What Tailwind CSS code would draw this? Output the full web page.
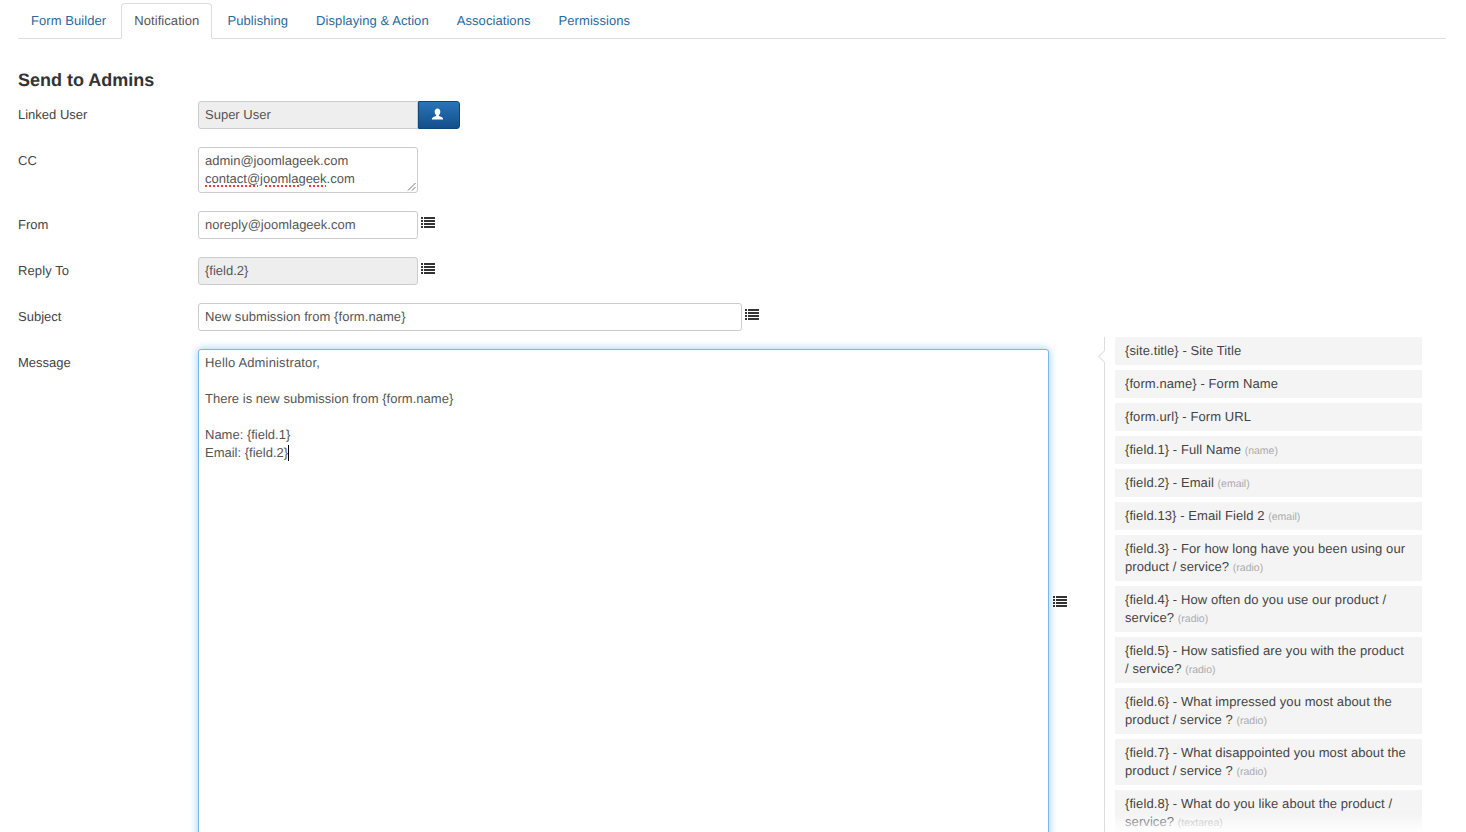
<!DOCTYPE html>
<html lang="en">
<head>
  <meta charset="UTF-8" />
  <meta name="viewport" content="width=device-width, initial-scale=1.0" />
  <title>Notification | Form</title>
  <script src="https://cdn.jsdelivr.net/npm/@tailwindcss/browser@4"></script>
</head>
<body class="bg-white h-screen overflow-hidden font-['Liberation_Sans',Arial,sans-serif] [text-rendering:geometricPrecision] text-[13px] leading-[18px] text-[#444]">
  <div class="pl-[18px] pr-[20px] pt-[3px]">

    <!-- Tabs -->
    <ul class="flex h-[36px] border-b border-[#ddd] tracking-[0.07px]">
      <li class="mr-[2px] px-[13px] pt-[9px] text-[#2a69a0]">Form Builder</li>
      <li class="mr-[2px] h-[36px] px-[12px] pt-[8px] bg-white border border-[#ddd] border-b-white rounded-t-[4px] text-[#555]">Notification</li>
      <li class="mr-[2px] px-[13px] pt-[9px] text-[#2a69a0]">Publishing</li>
      <li class="mr-[2px] px-[13px] pt-[9px] text-[#2a69a0]">Displaying &amp; Action</li>
      <li class="mr-[2px] px-[13px] pt-[9px] text-[#2a69a0]">Associations</li>
      <li class="mr-[2px] px-[13px] pt-[9px] text-[#2a69a0]">Permissions</li>
    </ul>

    <h2 class="mt-[28px] mb-[8px] text-[18px] leading-[26px] font-bold text-[#333]">Send to Admins</h2>

    <!-- Linked User -->
    <div class="flex mb-[18px]">
      <label class="w-[180px] pt-[5px]">Linked User</label>
      <div class="w-[220px] h-[28px] px-[6px] pt-[4px] bg-[#eee] border border-[#ccc] rounded-l-[3px] text-[#555]">Super User</div>
      <button class="w-[42px] h-[28px] pr-[4px] pb-[2px] flex items-center justify-center bg-gradient-to-b from-[#2a74b8] to-[#124f8c] border border-[#0f4679] rounded-r-[3px]">
        <svg class="w-[13px] h-[13px]" viewBox="0 0 12 12" fill="#fff"><path d="M6 0.5C4.4 0.5 3.4 1.8 3.4 3.4C3.4 4.8 4 5.9 4.8 6.5C4.8 7.2 4.5 7.5 3.4 7.9C2 8.4 0.8 8.8 0.8 10.6H11.2C11.2 8.8 10 8.4 8.6 7.9C7.5 7.5 7.2 7.2 7.2 6.5C8 5.9 8.6 4.8 8.6 3.4C8.6 1.8 7.6 0.5 6 0.5Z"/></svg>
      </button>
    </div>

    <!-- CC -->
    <div class="flex mb-[18px]">
      <label class="w-[180px] pt-[5px]">CC</label>
      <div class="relative w-[220px] h-[46px] px-[6px] pt-[4px] bg-white border border-[#ccc] rounded-[3px] text-[#555]">
        <div>admin@joomlageek.com</div>
        <div><span class="underline decoration-dotted decoration-[#e8402f] decoration-2 underline-offset-2">contact@joomlageek</span>.com</div>
        <svg class="absolute right-[1px] bottom-[1px] w-[9px] h-[9px]" viewBox="0 0 9 9" fill="none" stroke="#777" stroke-width="1"><path d="M1 8.5L8.5 1M5 8.5L8.5 5"/></svg>
      </div>
    </div>

    <!-- From -->
    <div class="flex mb-[18px]">
      <label class="w-[180px] pt-[5px]">From</label>
      <div class="w-[220px] h-[28px] px-[6px] pt-[4px] bg-white border border-[#ccc] rounded-[3px] text-[#555]">noreply@joomlageek.com</div>
      <svg class="ml-[3px] mt-[6px] w-[14px] h-[11px]" viewBox="0 0 14 11" fill="#333"><path d="M0 0h2v2H0zM3 0h11v2H3zM0 3h2v2H0zM3 3h11v2H3zM0 6h2v2H0zM3 6h11v2H3zM0 9h2v2H0zM3 9h11v2H3z"/></svg>
    </div>

    <!-- Reply To -->
    <div class="flex mb-[18px]">
      <label class="w-[180px] pt-[5px] tracking-[0.1px]">Reply To</label>
      <div class="w-[220px] h-[28px] px-[6px] pt-[4px] bg-[#eee] border border-[#ccc] rounded-[3px] text-[#555]">{field.2}</div>
      <svg class="ml-[3px] mt-[6px] w-[14px] h-[11px]" viewBox="0 0 14 11" fill="#333"><path d="M0 0h2v2H0zM3 0h11v2H3zM0 3h2v2H0zM3 3h11v2H3zM0 6h2v2H0zM3 6h11v2H3zM0 9h2v2H0zM3 9h11v2H3z"/></svg>
    </div>

    <!-- Subject -->
    <div class="flex mb-[18px]">
      <label class="w-[180px] pt-[5px]">Subject</label>
      <div class="w-[544px] h-[28px] px-[6px] pt-[4px] bg-white border border-[#ccc] rounded-[3px] text-[#555] tracking-[0.06px]">New submission from {form.name}</div>
      <svg class="ml-[3px] mt-[6px] w-[14px] h-[11px]" viewBox="0 0 14 11" fill="#333"><path d="M0 0h2v2H0zM3 0h11v2H3zM0 3h2v2H0zM3 3h11v2H3zM0 6h2v2H0zM3 6h11v2H3zM0 9h2v2H0zM3 9h11v2H3z"/></svg>
    </div>

    <!-- Message -->
    <div class="flex">
      <label class="w-[180px] pt-[5px] shrink-0">Message</label>
      <div class="w-[851px] h-[506px] shrink-0 px-[6px] pt-[4px] bg-white border border-[#75b9f0] rounded-[3px] text-[#555] shadow-[0_0_8px_rgba(82,168,236,0.6)]">
        <div class="tracking-[0.15px]">Hello Administrator,</div>
        <div class="h-[18px]"></div>
        <div class="tracking-[0.03px]">There is new submission from {form.name}</div>
        <div class="h-[18px]"></div>
        <div>Name: {field.1}</div>
        <div class="flex items-center">Email: {field.2}<span class="w-[1px] h-[16px] bg-black"></span></div>
      </div>
      <svg class="ml-[4px] mt-[247px] shrink-0 w-[14px] h-[11px]" viewBox="0 0 14 11" fill="#333"><path d="M0 0h2v2H0zM3 0h11v2H3zM0 3h2v2H0zM3 3h11v2H3zM0 6h2v2H0zM3 6h11v2H3zM0 9h2v2H0zM3 9h11v2H3z"/></svg>

      <!-- Placeholder list -->
      <div class="relative ml-[37px] -mt-[12px] w-[318px] h-[520px] shrink-0 pl-[10px] border-l border-[#ddd] flex flex-col gap-[5px] tracking-[0.085px]">
        <span class="absolute -left-[5px] top-[15px] w-[9px] h-[9px] rotate-45 bg-white border-l border-b border-[#ddd]"></span>
        <div class="h-[28px] pl-[10px] pr-[12px] pt-[5px] bg-[#f4f4f4]">{site.title} - Site Title</div>
        <div class="h-[28px] pl-[10px] pr-[12px] pt-[5px] bg-[#f4f4f4]">{form.name} - Form Name</div>
        <div class="h-[28px] pl-[10px] pr-[12px] pt-[5px] bg-[#f4f4f4]">{form.url} - Form URL</div>
        <div class="h-[28px] pl-[10px] pr-[12px] pt-[5px] bg-[#f4f4f4]">{field.1} - Full Name <small class="text-[10.5px] tracking-normal text-[#aaa]">(name)</small></div>
        <div class="h-[28px] pl-[10px] pr-[12px] pt-[5px] bg-[#f4f4f4]">{field.2} - Email <small class="text-[10.5px] tracking-normal text-[#aaa]">(email)</small></div>
        <div class="h-[28px] pl-[10px] pr-[12px] pt-[5px] bg-[#f4f4f4]">{field.13} - Email Field 2 <small class="text-[10.5px] tracking-normal text-[#aaa]">(email)</small></div>
        <div class="h-[46px] shrink-0 pl-[10px] pr-[12px] pt-[5px] bg-[#f4f4f4]">{field.3} - For how long have you been using our product / service? <small class="text-[10.5px] tracking-normal text-[#aaa]">(radio)</small></div>
        <div class="h-[46px] shrink-0 pl-[10px] pr-[12px] pt-[5px] bg-[#f4f4f4]">{field.4} - How often do you use our product / service? <small class="text-[10.5px] tracking-normal text-[#aaa]">(radio)</small></div>
        <div class="h-[46px] shrink-0 pl-[10px] pr-[12px] pt-[5px] bg-[#f4f4f4]">{field.5} - How satisfied are you with the product / service? <small class="text-[10.5px] tracking-normal text-[#aaa]">(radio)</small></div>
        <div class="h-[46px] shrink-0 pl-[10px] pr-[12px] pt-[5px] bg-[#f4f4f4]">{field.6} - What impressed you most about the product / service ? <small class="text-[10.5px] tracking-normal text-[#aaa]">(radio)</small></div>
        <div class="h-[46px] shrink-0 pl-[10px] pr-[12px] pt-[5px] bg-[#f4f4f4]">{field.7} - What disappointed you most about the product / service ? <small class="text-[10.5px] tracking-normal text-[#aaa]">(radio)</small></div>
        <div class="h-[46px] shrink-0 pl-[10px] pr-[12px] pt-[5px] bg-[#f4f4f4]">{field.8} - What do you like about the product / service? <small class="text-[10.5px] tracking-normal text-[#aaa]">(textarea)</small></div>
      </div>
    </div>
  </div>

  <!-- Fade over the cut-off bottom of the list -->
  <div class="fixed left-[1106px] top-[812px] w-[340px] h-[20px] bg-gradient-to-b from-white/0 to-white/90"></div>
</body>
</html>
